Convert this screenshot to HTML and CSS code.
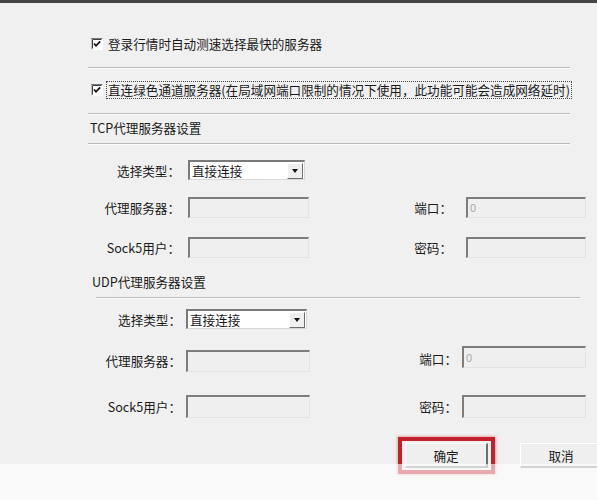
FILE: index.html
```html
<!DOCTYPE html>
<html lang="zh-CN">
<head>
<meta charset="utf-8">
<title>代理服务器设置</title>
<link rel="stylesheet" href="styles.css">
</head>
<body>
<div class="page">
  <div class="topbar"></div>

  <div class="opts">
    <div class="check-row first">
      <span class="cb"><svg width="12" height="12" viewBox="0 0 12 12"><rect x="0" y="0" width="12" height="12" fill="#ffffff"/><path d="M0 11.5V0.5H11.5" fill="none" stroke="#7a7a7a" stroke-width="1"/><path d="M1.5 10.5V1.5H10.5" fill="none" stroke="#404040" stroke-width="1"/><path d="M3 5.5L5 7.8L9.2 3.3" fill="none" stroke="#111" stroke-width="1.7"/></svg></span>
      <span class="cb-text">登录行情时自动测速选择最快的服务器</span>
    </div>
    <div class="sep s1"></div>
    <div class="check-row second">
      <span class="cb"><svg width="12" height="12" viewBox="0 0 12 12"><rect x="0" y="0" width="12" height="12" fill="#ffffff"/><path d="M0 11.5V0.5H11.5" fill="none" stroke="#7a7a7a" stroke-width="1"/><path d="M1.5 10.5V1.5H10.5" fill="none" stroke="#404040" stroke-width="1"/><path d="M3 5.5L5 7.8L9.2 3.3" fill="none" stroke="#111" stroke-width="1.7"/></svg></span>
      <span class="cb-text focus">直连绿色通道服务器(在局域网端口限制的情况下使用，此功能可能会造成网络延时)</span>
    </div>
    <div class="sep s2"></div>
    <div class="title tcp-title">TCP代理服务器设置</div>
    <div class="sep s3"></div>
  </div>

  <div class="form tcp">
    <div class="frow row-select">
      <span class="lbl">选择类型：</span>
      <div class="select"><span class="sel-text">直接连接</span><span class="sel-btn"><span class="tri"></span></span></div>
    </div>
    <div class="frow row-b">
      <span class="lbl">代理服务器：</span>
      <div class="input"></div>
      <span class="lbl rl">端口：</span>
      <div class="input ri"><span class="ph">0</span></div>
    </div>
    <div class="frow row-c">
      <span class="lbl">Sock5用户：</span>
      <div class="input"></div>
      <span class="lbl rl">密码：</span>
      <div class="input ri"></div>
    </div>
  </div>

  <div class="title udp-title">UDP代理服务器设置</div>
  <div class="sep s4"></div>

  <div class="form udp">
    <div class="frow row-select">
      <span class="lbl">选择类型：</span>
      <div class="select"><span class="sel-text">直接连接</span><span class="sel-btn"><span class="tri"></span></span></div>
    </div>
    <div class="frow row-b">
      <span class="lbl low">代理服务器：</span>
      <div class="input low"></div>
      <span class="lbl rl high">端口：</span>
      <div class="input ri high"><span class="ph">0</span></div>
    </div>
    <div class="frow row-c">
      <span class="lbl">Sock5用户：</span>
      <div class="input"></div>
      <span class="lbl rl">密码：</span>
      <div class="input ri"></div>
    </div>
  </div>

  <div class="buttons">
    <div class="mark"><button class="btn" type="button">确定</button></div>
    <button class="btn cancel" type="button">取消</button>
  </div>

  <div class="fade"></div>
</div>
</body>
</html>
```

FILE: styles.css
```css
html, body {
  margin: 0;
  padding: 0;
  overflow: hidden;
}

body {
  background: #f0f0f0;
  font-family: "Noto Sans CJK SC", "Noto Sans", sans-serif;
  font-size: 12.6px;
  color: #1a1a1a;
}

.page {
  position: relative;
  width: 597px;
  height: 500px;
  overflow: hidden;
}

.topbar {
  height: 3px;
  background: #454545;
}

/* ---------- options ---------- */
.opts {
  margin-left: 88px;
  width: 482px;
  padding-top: 31px;
}

.check-row {
  display: flex;
  align-items: center;
  height: 20px;
  padding-left: 3px;
  gap: 5px;
  white-space: nowrap;
}

.check-row.second {
  margin-top: 11px;
}

.cb {
  display: flex;
  width: 12px;
  height: 12px;
  flex: none;
}

.cb-text {
  line-height: 16px;
}

.cb-text.focus {
  border: 1px dotted #444;
  padding: 0 1px;
  margin-left: -2px;
}

.sep {
  height: 1px;
  background: #b9b9b9;
  border-bottom: 1px solid #fbfbfb;
}

.s1 { margin-top: 13px; }
.s2 { margin-top: 13px; }
.s3 { margin-top: 5px; }

.title {
  height: 20px;
  line-height: 20px;
  white-space: nowrap;
}

.tcp-title {
  margin-top: 3px;
  padding-left: 2px;
}

.udp-title {
  margin-top: 14px;
  margin-left: 92px;
}

.s4 {
  margin-top: 5px;
  margin-left: 96px;
  width: 484px;
}

/* ---------- forms ---------- */
.form {
  margin-left: 100px;
}

.frow {
  display: flex;
  align-items: center;
}

.lbl {
  width: 80px;
  text-align: right;
  white-space: nowrap;
  flex: none;
}

.tcp .lbl { margin-right: 8px; }
.tcp .lbl.rl { width: 60px; margin-left: 83px; margin-right: 14px; }

.udp .lbl { width: 81px; margin-right: 5px; }
.udp .lbl.rl { width: 60px; margin-left: 87px; margin-right: 5px; }

.tcp .row-select { margin-top: 15px; height: 20px; }
.tcp .row-b { margin-top: 17px; height: 21px; }
.tcp .row-c { margin-top: 19px; height: 21px; }

.udp .row-select { margin-top: 10px; height: 20px; }
.udp .row-b { margin-top: 17px; height: 26px; }
.udp .row-c { margin-top: 22px; height: 24px; }

.input {
  box-sizing: border-box;
  width: 121px;
  height: 21px;
  background: #efefef;
  border-top: 2px solid #7d7d7d;
  border-left: 2px solid #7d7d7d;
  border-right: 1px solid #e4e4e4;
  border-bottom: 1px solid #e4e4e4;
  display: flex;
  align-items: center;
  padding-left: 2px;
  flex: none;
}

.tcp .input.ri { width: 120px; }

.udp .input { width: 124px; height: 22px; }
.udp .row-c .input { height: 23px; }

.udp .low { align-self: flex-end; }
.udp .lbl.low { margin-bottom: 2px; }
.udp .high { align-self: flex-start; }
.udp .lbl.high { margin-top: 3px; }

.ph {
  font-family: "Liberation Sans", sans-serif;
  font-size: 11px;
  color: #a9a9a9;
}

.select {
  box-sizing: border-box;
  width: 117px;
  height: 20px;
  background: #ffffff;
  border-top: 2px solid #7a7a7a;
  border-left: 2px solid #7a7a7a;
  border-right: 1px solid #d8d8d8;
  border-bottom: 1px solid #d8d8d8;
  display: flex;
  align-items: center;
  justify-content: space-between;
  flex: none;
}

.udp .select { width: 121px; }

.sel-text {
  padding-left: 2px;
  line-height: 16px;
}

.sel-btn {
  box-sizing: border-box;
  width: 16px;
  height: 16px;
  margin-right: 1px;
  background: #efefef;
  border-top: 1px solid #ffffff;
  border-left: 1px solid #ffffff;
  border-right: 1px solid #6e6e6e;
  border-bottom: 1px solid #6e6e6e;
  display: flex;
  align-items: center;
  justify-content: center;
}

.tri {
  width: 0;
  height: 0;
  border-left: 3.5px solid transparent;
  border-right: 3.5px solid transparent;
  border-top: 4px solid #111;
}

/* ---------- buttons ---------- */
.buttons {
  display: flex;
  align-items: center;
  margin-top: 19px;
  margin-left: 398px;
  gap: 25px;
}

.mark {
  border: 4px solid #c4202b;
  padding: 2px 3px;
  box-shadow: 0 0 2px 1px rgba(220, 120, 125, 0.55);
  flex: none;
}

.btn {
  box-sizing: border-box;
  width: 83px;
  height: 25px;
  margin: 0;
  padding: 0;
  background: #efefef;
  border-top: 1px solid #ffffff;
  border-left: 1px solid #ffffff;
  border-right: 2px solid #6f6f6f;
  border-bottom: 2px solid #8a8a8a;
  font-family: "Noto Sans CJK SC", "Noto Sans", sans-serif;
  font-size: 12.6px;
  color: #1a1a1a;
  display: block;
  flex: none;
}

/* washed-out lower strip of the photo */
.fade {
  position: absolute;
  left: 0;
  right: 0;
  top: 464px;
  bottom: 0;
  background: rgba(255, 255, 255, 0.62);
}
```
